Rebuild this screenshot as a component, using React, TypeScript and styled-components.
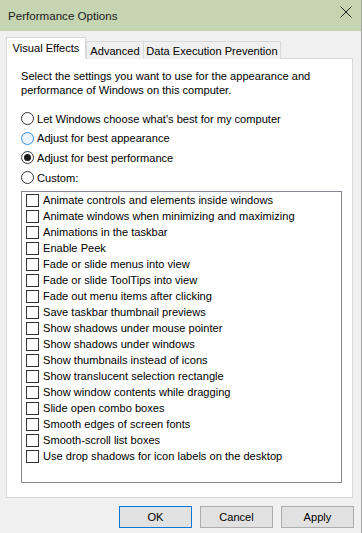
import React from 'react';
import styled, { createGlobalStyle } from 'styled-components';

const GlobalStyle = createGlobalStyle`
  html, body {
    margin: 0;
    padding: 0;
    background: #f0f0f0;
  }
  body {
    font-family: 'Liberation Sans', Arial, sans-serif;
    font-size: 11.1px;
    color: #000;
  }
`;

const Window = styled.div`
  width: 362px;
  height: 533px;
  box-sizing: border-box;
  background: #f0f0f0;
  border-right: 1px solid #a6a6a6;
  display: flex;
  flex-direction: column;
  overflow: hidden;
`;

const TitleBar = styled.div`
  height: 31px;
  flex: none;
  background: #c5d4b1;
  display: flex;
  align-items: center;
  justify-content: space-between;
  padding: 0 9px 7px 8px;
  box-sizing: border-box;
  font-size: 11.6px;
  color: #1a1a1a;
  & > span {
    padding-top: 7px;
  }
`;

const CloseIcon = styled.svg`
  display: block;
`;

const TabStrip = styled.div`
  display: flex;
  align-items: flex-end;
  padding: 6px 0 0 6px;
  height: 22px;
  flex: none;
  position: relative;
  z-index: 1;
`;

const Tab = styled.div<{ $active?: boolean; $w: number }>`
  width: ${p => p.$w}px;
  height: ${p => (p.$active ? 22 : 18)}px;
  box-sizing: border-box;
  border: 1px solid #d9d9d9;
  border-bottom: none;
  margin-left: ${p => (p.$active ? 0 : -1)}px;
  background: ${p => (p.$active ? '#fff' : '#f0f0f0')};
  display: flex;
  align-items: center;
  justify-content: center;
  padding-bottom: ${p => (p.$active ? 2 : 0)}px;
  white-space: nowrap;
  overflow: hidden;
  &:first-child {
    margin-left: 0;
    margin-right: 1px;
  }
`;

const Panel = styled.div`
  margin: -1px 8px 0 6px;
  height: 440px;
  flex: none;
  box-sizing: border-box;
  background: #fff;
  border: 1px solid #d9d9d9;
  padding: 11px 0 0 14px;
`;

const Intro = styled.p`
  margin: 0;
  line-height: 13.5px;
  width: 300px;
`;

const RadioGroup = styled.div`
  margin-top: 12px;
  display: flex;
  flex-direction: column;
`;

const RadioRow = styled.label`
  height: 19.6px;
  display: flex;
  align-items: center;
  gap: 3px;
`;

const RadioCircle = styled.span<{ $checked?: boolean; $hover?: boolean }>`
  width: 13px;
  height: 13px;
  box-sizing: border-box;
  border-radius: 50%;
  border: 1px solid ${p => (p.$hover ? '#2f8fe0' : '#333')};
  background: ${p => (p.$hover ? '#eaf4fd' : '#fff')};
  display: flex;
  align-items: center;
  justify-content: center;
  flex: none;
  &::after {
    content: '';
    display: ${p => (p.$checked ? 'block' : 'none')};
    width: 7px;
    height: 7px;
    border-radius: 50%;
    background: #1a1a1a;
  }
`;

const ListBox = styled.div`
  margin-top: 4px;
  width: 321px;
  height: 292px;
  box-sizing: border-box;
  border: 1px solid #828790;
  padding: 0 0 0 4px;
  display: flex;
  flex-direction: column;
`;

const CheckRow = styled.label`
  height: 16px;
  flex: none;
  display: flex;
  align-items: center;
  gap: 4px;
  white-space: nowrap;
`;

const CheckBox = styled.span`
  width: 13px;
  height: 13px;
  box-sizing: border-box;
  border: 1px solid #333;
  background: #fff;
  flex: none;
`;

const ButtonRow = styled.div`
  display: flex;
  justify-content: flex-end;
  gap: 8px;
  padding: 8px 7px 0 0;
`;

const Button = styled.button<{ $primary?: boolean }>`
  width: 73px;
  height: 22px;
  box-sizing: border-box;
  font: inherit;
  color: #000;
  background: #e1e1e1;
  border: 1px solid ${p => (p.$primary ? '#0078d7' : '#adadad')};
  padding: 0;
  cursor: pointer;
`;

const effects = [
  'Animate controls and elements inside windows',
  'Animate windows when minimizing and maximizing',
  'Animations in the taskbar',
  'Enable Peek',
  'Fade or slide menus into view',
  'Fade or slide ToolTips into view',
  'Fade out menu items after clicking',
  'Save taskbar thumbnail previews',
  'Show shadows under mouse pointer',
  'Show shadows under windows',
  'Show thumbnails instead of icons',
  'Show translucent selection rectangle',
  'Show window contents while dragging',
  'Slide open combo boxes',
  'Smooth edges of screen fonts',
  'Smooth-scroll list boxes',
  'Use drop shadows for icon labels on the desktop',
];

const options = [
  { label: "Let Windows choose what's best for my computer" },
  { label: 'Adjust for best appearance', hover: true },
  { label: 'Adjust for best performance', checked: true },
  { label: 'Custom:' },
];

const App: React.FC = () => {
  return (
    <Window>
      <GlobalStyle />
      <TitleBar>
        <span>Performance Options</span>
        <CloseIcon width="12" height="12" viewBox="0 0 12 12">
          <path d="M0.5 0.5 L11.5 11.5 M11.5 0.5 L0.5 11.5" stroke="#1f1f1f" strokeWidth="1" fill="none" />
        </CloseIcon>
      </TitleBar>
      <TabStrip>
        <Tab $active $w={80}>Visual Effects</Tab>
        <Tab $w={58}>Advanced</Tab>
        <Tab $w={138}>Data Execution Prevention</Tab>
      </TabStrip>
      <Panel>
        <Intro>
          Select the settings you want to use for the appearance and performance of Windows on this computer.
        </Intro>
        <RadioGroup>
          {options.map(o => (
            <RadioRow key={o.label}>
              <RadioCircle $checked={o.checked} $hover={o.hover} />
              {o.label}
            </RadioRow>
          ))}
        </RadioGroup>
        <ListBox>
          {effects.map(e => (
            <CheckRow key={e}>
              <CheckBox />
              {e}
            </CheckRow>
          ))}
        </ListBox>
      </Panel>
      <ButtonRow>
        <Button $primary>OK</Button>
        <Button>Cancel</Button>
        <Button>Apply</Button>
      </ButtonRow>
    </Window>
  );
};

export default App;
